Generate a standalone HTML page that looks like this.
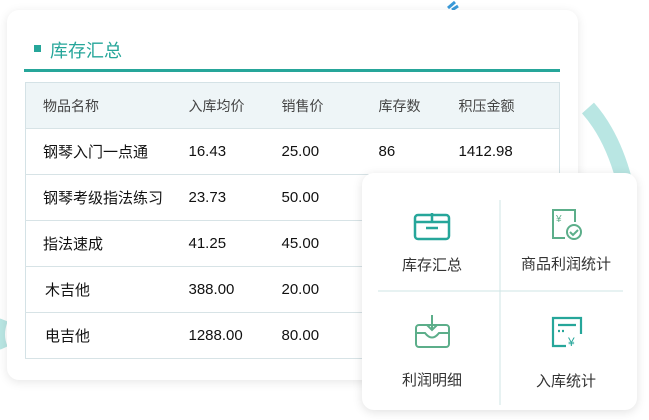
<!DOCTYPE html>
<html><head><meta charset="utf-8"><style>
body{margin:0;width:649px;height:420px;background:#fff;position:relative;overflow:hidden;font-family:"Liberation Sans","Noto Sans CJK SC",sans-serif;}
.card{position:absolute;left:7px;top:10px;width:571px;height:370px;background:#fff;border-radius:12px;box-shadow:0 2px 10px rgba(0,0,0,.10);}
.sq{position:absolute;left:34px;top:45px;width:7px;height:7px;background:#26a69a;}
.title{position:absolute;left:50px;top:37px;font-size:18px;color:#26a69a;}
.line{position:absolute;left:24px;top:69px;width:536px;height:3px;background:#26a69a;}
table{position:absolute;left:25px;top:82px;width:535px;border-collapse:collapse;font-size:15px;color:#111;border:1px solid #d4e2e6;}
td{height:45px;border-bottom:1px solid #d7e3e6;padding:0;}
tr.h td{background:#eef5f7;color:#444;font-size:14px;}
.pop{position:absolute;left:362px;top:173px;width:275px;height:237px;background:#fff;border-radius:12px;box-shadow:0 2px 10px rgba(0,0,0,.12);}
.lab{position:absolute;font-size:15px;color:#333;width:140px;text-align:center;}
</style></head><body>
<svg style="position:absolute;left:0;top:0" width="649" height="420">
<path d="M588 108 Q612 135 624 180" stroke="#b9e6e3" stroke-width="16" fill="none"/>
<path d="M448 8 L455 2 M452 10 L458 6" stroke="#3a9ad9" stroke-width="3"/>
<path d="M4 320 Q-2 335 4 348" stroke="#b9e6e3" stroke-width="8" fill="none"/>
</svg>
<div class="card"></div>
<div class="sq"></div><div class="title">库存汇总</div><div class="line"></div>
<table>
<colgroup><col style="width:163px"><col style="width:93px"><col style="width:97px"><col style="width:80px"><col></colgroup>
<tr class="h"><td style="padding-left:17px">物品名称</td><td>入库均价</td><td>销售价</td><td>库存数</td><td>积压金额</td></tr>
<tr><td style="padding-left:17px">钢琴入门一点通</td><td>16.43</td><td>25.00</td><td>86</td><td>1412.98</td></tr>
<tr><td style="padding-left:17px">钢琴考级指法练习</td><td>23.73</td><td>50.00</td><td></td><td></td></tr>
<tr><td style="padding-left:17px">指法速成</td><td>41.25</td><td>45.00</td><td></td><td></td></tr>
<tr><td style="padding-left:19px">木吉他</td><td>388.00</td><td>20.00</td><td></td><td></td></tr>
<tr><td style="padding-left:19px">电吉他</td><td>1288.00</td><td>80.00</td><td></td><td></td></tr>
</table>
<div class="pop"></div>
<svg style="position:absolute;left:0;top:0" width="649" height="420">
<line x1="500" y1="200" x2="500" y2="405" stroke="#cfe6e6"/>
<line x1="378" y1="291" x2="623" y2="291" stroke="#cfe6e6"/>
<g fill="none" stroke="#26a69a" stroke-width="2.5">
<rect x="415" y="215" width="34" height="24" rx="3"/><path d="M415 222 L449 222 M432 213 V222"/><line x1="426" y1="228" x2="438" y2="228"/>
</g>
<g fill="none" stroke="#5cae8a" stroke-width="2">
<path d="M565 238 H553 V210 H575 V222"/><circle cx="574" cy="232" r="7"/><path d="M570 232 l3 3 l5 -5"/>
<text x="556" y="222" font-size="10" fill="#5cae8a" stroke="none">¥</text>
<rect x="416" y="325" width="33" height="22" rx="3"/><path d="M416 333 H425 Q432 342 439 333 H449"/><path d="M432 315 V330 M427 325 l5 5 l5 -5"/>
</g>
<g fill="none" stroke="#26a69a" stroke-width="2.2">
<path d="M566 346 H553 V318 H581 V334"/><line x1="558" y1="325" x2="576" y2="325"/><line x1="558" y1="331" x2="566" y2="331" stroke-dasharray="2 2"/>
<text x="568" y="346" font-size="12" fill="#26a69a" stroke="none">¥</text>
</g>
</svg>
<div class="lab" style="left:362px;top:254px">库存汇总</div>
<div class="lab" style="left:496px;top:253px">商品利润统计</div>
<div class="lab" style="left:362px;top:369px">利润明细</div>
<div class="lab" style="left:496px;top:370px">入库统计</div>
</body></html>
